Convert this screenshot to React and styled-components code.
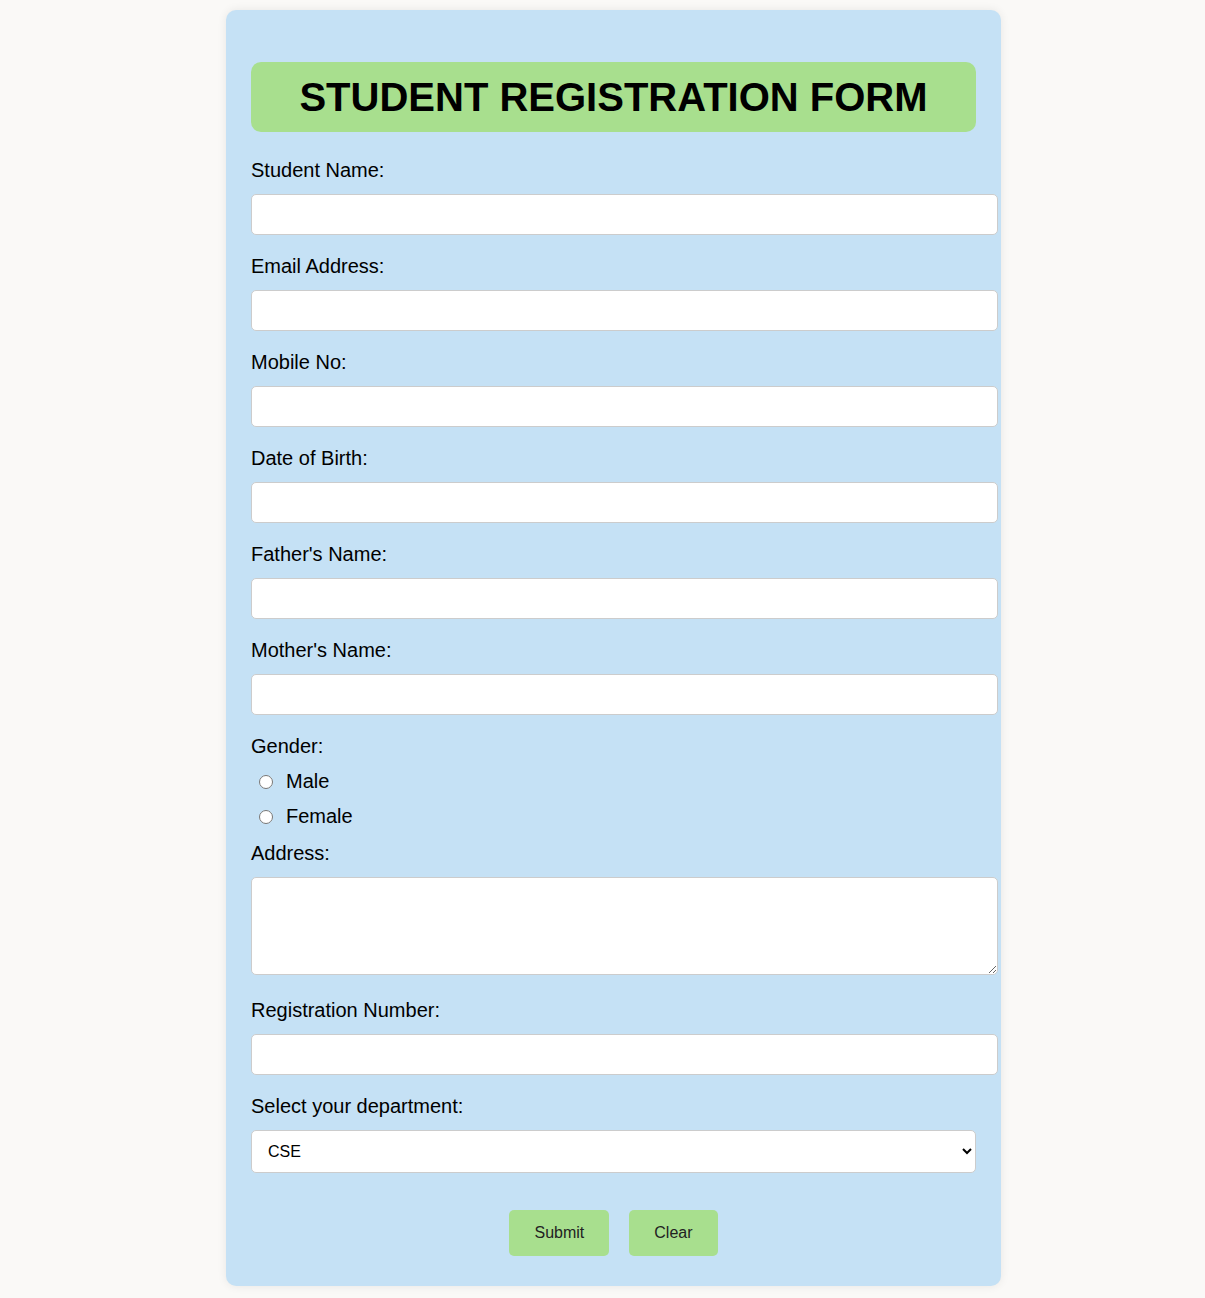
import React, { useState } from 'react'
import styled, { createGlobalStyle } from 'styled-components'

const GlobalStyle = createGlobalStyle`
	html, body {
		margin: 0;
		padding: 0;
		background-color: #faf9f7;
		font-family: 'Liberation Sans', Arial, sans-serif;
	}
`

const fields = [
	{ id: 'name', label: 'Student Name:' },
	{ id: 'email', label: 'Email Address:' },
	{ id: 'mobile', label: 'Mobile No:' },
	{ id: 'dob', label: 'Date of Birth:' },
	{ id: 'father', label: "Father's Name:" },
	{ id: 'mother', label: "Mother's Name:" },
]

const App = () => {
	const [form, setForm] = useState({ dept: 'CSE' })
	const change = (e) => setForm({ ...form, [e.target.name]: e.target.value })
	const clear = () => setForm({ dept: 'CSE' })

	return (
		<Page>
			<GlobalStyle />
			<Card>
				<Title>STUDENT REGISTRATION FORM</Title>
				{fields.map((f) => (
					<div key={f.id}>
						<Label htmlFor={f.id}>{f.label}</Label>
						<Input id={f.id} name={f.id} value={form[f.id] || ''} onChange={change} />
					</div>
				))}
				<Label>Gender:</Label>
				<RadioGroup>
					<RadioRow>
						<Radio type="radio" name="gender" value="male" onChange={change} checked={form.gender === 'male'} />
						Male
					</RadioRow>
					<RadioRow>
						<Radio type="radio" name="gender" value="female" onChange={change} checked={form.gender === 'female'} />
						Female
					</RadioRow>
				</RadioGroup>
				<Label htmlFor="address">Address:</Label>
				<TextArea id="address" name="address" value={form.address || ''} onChange={change} />
				<Label htmlFor="reg">Registration Number:</Label>
				<Input id="reg" name="reg" value={form.reg || ''} onChange={change} />
				<Label htmlFor="dept">Select your department:</Label>
				<Select id="dept" name="dept" value={form.dept} onChange={change}>
					<option>CSE</option>
					<option>ECE</option>
					<option>EEE</option>
					<option>MECH</option>
					<option>CIVIL</option>
				</Select>
				<Buttons>
					<Button type="button">Submit</Button>
					<Button type="button" onClick={clear}>Clear</Button>
				</Buttons>
			</Card>
		</Page>
	)
}

const Page = styled.div`
	display: flex;
	justify-content: center;
	padding: 10px 0 10px 22px;
`
const Card = styled.div`
	box-sizing: border-box;
	width: 775px;
	padding: 27px 25px 30px;
	background-color: #c5e1f5;
	border-radius: 10px;
	box-shadow: 0 0 10px rgba(0, 0, 0, 0.08);
`
const Title = styled.h1`
	margin: 25px 0 27px;
	padding: 12px 0;
	background-color: #a8df8e;
	border-radius: 10px;
	font-size: 40px;
	line-height: 46px;
	font-weight: bold;
	text-align: center;
	color: #000;
`
const Label = styled.label`
	display: block;
	margin-bottom: 12px;
	font-size: 20px;
	line-height: 23px;
	color: #000;
`
const Input = styled.input`
	display: block;
	width: 100%;
	height: 19px;
	margin: 0 0 20px;
	padding: 10px;
	border: 1px solid #ccc;
	border-radius: 5px;
	background: #fff;
	font-family: inherit;
	font-size: 16px;
	outline: none;
`
const RadioGroup = styled.div`
	display: flex;
	flex-direction: column;
	gap: 12px;
	margin: 2px 0 14px;
`
const RadioRow = styled.label`
	display: flex;
	align-items: center;
	height: 23px;
	padding-left: 8px;
	font-size: 20px;
	color: #000;
`
const Radio = styled.input`
	width: 14px;
	height: 14px;
	margin: 0 13px 0 0;
`
const TextArea = styled.textarea`
	display: block;
	width: 100%;
	height: 76px;
	margin: 0 0 24px;
	padding: 10px;
	border: 1px solid #ccc;
	border-radius: 5px;
	background: #fff;
	font-family: inherit;
	font-size: 16px;
	outline: none;
`
const Select = styled.select`
	display: block;
	box-sizing: border-box;
	width: 100%;
	height: 43px;
	margin: 2px 0 0;
	padding: 0 10px 0 12px;
	border: 1px solid #ccc;
	border-radius: 5px;
	background: #fff;
	font-family: inherit;
	font-size: 16px;
	color: #000;
	outline: none;
`
const Buttons = styled.div`
	display: flex;
	justify-content: center;
	gap: 20px;
	margin-top: 37px;
`
const Button = styled.button`
	height: 46px;
	padding: 0 25px;
	background-color: #a8df8e;
	border: none;
	border-radius: 5px;
	font-family: inherit;
	font-size: 16px;
	color: #222;
	cursor: pointer;
`

export default App
